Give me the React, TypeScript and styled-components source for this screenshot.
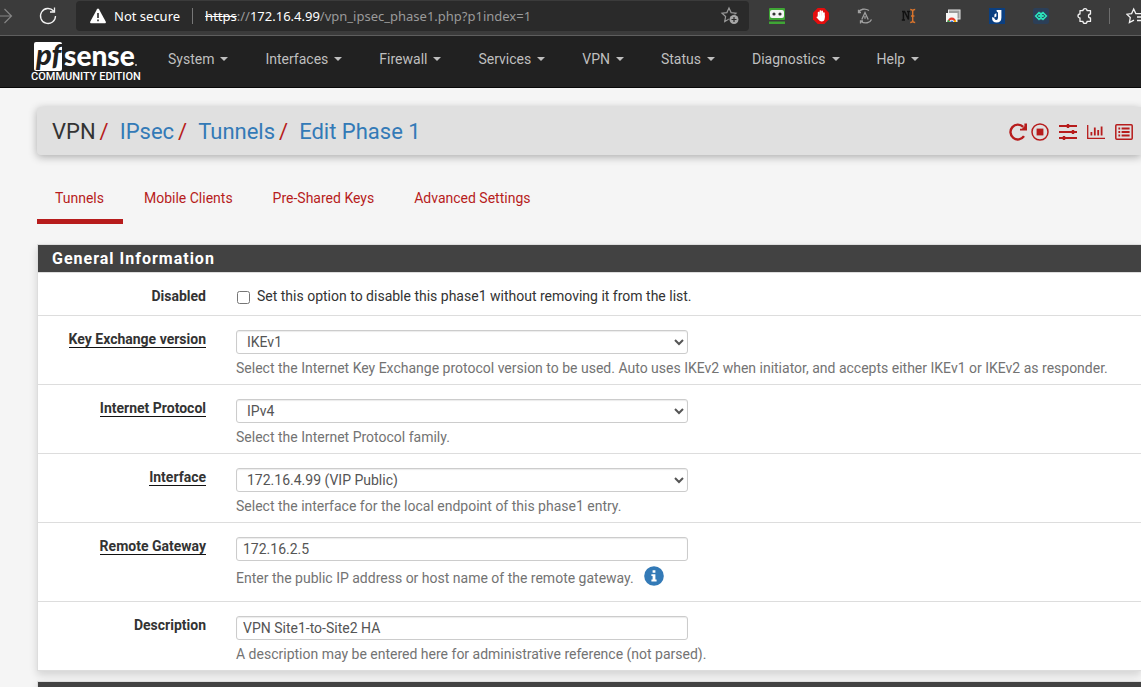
import React from "react";
import styled, { createGlobalStyle } from "styled-components";

const GlobalStyle = createGlobalStyle`
  *, *::before, *::after { box-sizing: border-box; }
  html { background: #f5f5f5; }
  body {
    margin: 0;
    overflow: hidden;
    background: #f5f5f5;
    color: #333;
    font-family: Roboto, "Liberation Sans", sans-serif;
    font-size: 14px;
    line-height: 20px;
  }
  svg { display: block; flex: none; overflow: visible; }
`;

/* Browser toolbar */

const Toolbar = styled.div`
  display: flex;
  height: 36px;
  padding-bottom: 4px;
  background: #3b3b3b;
  border-bottom: 1px solid #5e5e5e;
  font-family: "Noto Sans", "Open Sans", sans-serif;
  font-size: 13px;
`;

const ToolButton = styled.button<{ $width?: number }>`
  display: flex;
  flex: none;
  align-items: center;
  justify-content: center;
  width: ${(p) => p.$width ?? 44}px;
  height: 32px;
  padding: 0;
  border: 0;
  background: none;
  color: #f2f2f2;
`;

const LeftTools = styled.div`
  display: flex;
  flex: none;
  width: 76px;
`;

const AddressBar = styled.div`
  display: flex;
  flex: 1;
  align-items: center;
  min-width: 0;
  height: 30px;
  margin-top: 1px;
  padding: 0 9px 0 14px;
  border-radius: 4px;
  background: #2a2a2a;
`;

const Security = styled.button`
  display: flex;
  flex: none;
  align-items: center;
  gap: 8px;
  padding: 0 12px 0 0;
  border: 0;
  border-right: 1px solid #777;
  background: none;
  color: #fff;
  font: inherit;
  line-height: 16px;
`;

const Url = styled.div`
  flex: 1;
  min-width: 0;
  margin-left: 12px;
  overflow: hidden;
  color: #9a9a9a;
  white-space: nowrap;

  s, b { color: #fff; font-weight: 400; }
`;

const Extensions = styled.div`
  display: flex;
  flex: none;
  padding-left: 6px;
`;

const ToolDivider = styled.span`
  width: 1px;
  height: 16px;
  margin: 8px 16px 0 2px;
  background: #6d6d6d;
`;

const ClippedTool = styled(ToolButton)`
  justify-content: flex-start;
  overflow: hidden;
`;

/* Site navigation */

const NavBar = styled.nav`
  display: flex;
  align-items: flex-start;
  height: 52px;
  padding-left: 31px;
  background: #212121;
  border-bottom: 1px solid #080808;
`;

const Brand = styled.a`
  display: block;
  width: 108px;
  padding-top: 5px;
`;

const Menu = styled.ul`
  display: flex;
  gap: 37px;
  margin: 0;
  padding: 13px 0 0 29px;
  list-style: none;
`;

const MenuLink = styled.a`
  display: flex;
  align-items: center;
  gap: 6px;
  color: #bfbfbf;
  text-decoration: none;
  white-space: nowrap;

  &::after {
    content: "";
    border-top: 4px solid;
    border-right: 4px solid transparent;
    border-left: 4px solid transparent;
  }
`;

/* Page */

const Page = styled.main`
  padding: 19px 0 0 37px;
`;

const PageHeader = styled.header`
  display: flex;
  align-items: center;
  justify-content: space-between;
  height: 48px;
  padding: 2px 8px 0 15px;
  border-radius: 4px 0 0 4px;
  background: #e0e0e0;
  box-shadow: 0 2px 8px rgba(0, 0, 0, 0.3);
`;

const Crumbs = styled.ol`
  display: flex;
  margin: 0;
  padding: 0;
  list-style: none;
  font-size: 22px;
  line-height: 28px;
  white-space: nowrap;

  li + li::before {
    content: "/";
    padding: 0 11px 0 5px;
    color: #b71c1c;
  }

  li + li { margin-left: -1px; }

  a { color: #337ab7; text-decoration: none; }
`;

const Actions = styled.div`
  display: flex;
  gap: 10px;
`;

const ActionGroup = styled.div`
  display: flex;
  gap: 4px;
`;

const ActionLink = styled.a`
  color: #b71c1c;
`;

const Tabs = styled.ul`
  display: flex;
  gap: 3px;
  margin: 26px 0 20px;
  padding: 0;
  list-style: none;
`;

const Tab = styled.a<{ $active?: boolean }>`
  display: block;
  height: 43px;
  padding: 7px 19px 0 18px;
  border-bottom: 5px solid ${(p) => (p.$active ? "#b71c1c" : "transparent")};
  color: #b71c1c;
  text-decoration: none;
`;

const Panel = styled.section`
  margin-bottom: 10px;
  border: solid #ddd;
  border-width: 1px 0 1px 1px;
  background: #fff;
  box-shadow: 0 4px 8px rgba(0, 0, 0, 0.14);
`;

const PanelTitle = styled.h2`
  height: 27px;
  margin: 0;
  padding: 0 14px;
  background: #424242;
  color: #fff;
  font-size: 16px;
  font-weight: 700;
  letter-spacing: 1px;
  line-height: 27px;
`;

const Row = styled.div`
  display: grid;
  grid-template-columns: 168px minmax(0, 1fr);
  column-gap: 30px;
  padding: 14px 1px 6px 0;
  border-top: 1px solid #ddd;
`;

const RowLabel = styled.div`
  height: 20px;
  color: #333;
  font-weight: 700;
  line-height: 18px;
  text-align: right;
`;

const LabelText = styled.label<{ $required?: boolean }>`
  display: inline-block;
  height: 18px;
  border-bottom: ${(p) => (p.$required ? "1px solid #111" : "0")};
`;

const CheckLine = styled.label`
  display: flex;
  align-items: center;
  gap: 7px;
  height: 22px;
  padding-bottom: 4px;
  line-height: 18px;

  input { width: 13px; height: 13px; margin: 2px 0 0 1px; }
`;

const controlStyle = `
  display: block;
  width: 50%;
  height: 24px;
  border: 1px solid #ccc;
  border-radius: 3px;
  background-color: #fff;
  box-shadow: inset 0 1px 1px rgba(0, 0, 0, 0.08);
  color: #555;
  font-family: inherit;
  font-size: 14px;
`;

const Select = styled.select`
  ${controlStyle}
  padding: 0 0 0 6px;
`;

const TextInput = styled.input`
  ${controlStyle}
  padding: 0 6px;
`;

const Help = styled.div<{ $tall?: boolean }>`
  display: flex;
  align-items: center;
  gap: 10px;
  min-height: ${(p) => (p.$tall ? 30 : 20)}px;
  padding-bottom: ${(p) => (p.$tall ? 4 : 0)}px;
  margin-top: 4px;
  color: #737373;
`;

const InfoButton = styled.button`
  padding: 0 0 4px;
  border: 0;
  background: none;
`;

const lineArt = { fill: "none", stroke: "currentColor" } as const;

const Logo = () => (
  <svg width="108" height="40" viewBox="0 0 108 40" role="img" aria-label="pfSense Community Edition">
    <rect x="3" y="1" width="28" height="29" rx="2" fill="#fff" />
    <text x="5" y="24" fontFamily="Lato" fontSize="29" fontWeight="900" fontStyle="italic" fill="#212121">pf</text>
    <text x="33" y="25" fontFamily="Lato" fontSize="28" fontWeight="900" fill="#fff">sense</text>
    <rect x="104" y="23" width="2" height="2" fill="#999" />
    <text x="0" y="39" fontFamily="Roboto" fontSize="11" fontWeight="500" fill="#fff">COMMUNITY EDITION</text>
  </svg>
);

const starPath = "M8 1 L10.1 5.6 L15 6.2 L11.4 9.5 L12.3 14.6 L8 12.1 L3.7 14.6 L4.6 9.5 L1 6.2 L5.9 5.6 Z";

const extensions = [
  {
    name: "Password manager",
    icon: (
      <svg width="16" height="16" viewBox="0 0 16 16">
        <rect width="16" height="12" rx="1" fill="#3fa535" />
        <rect x="1" y="2" width="14" height="8" rx="2" fill="#f4f4f4" />
        <circle cx="5" cy="6" r="1.6" fill="#333" /><circle cx="11" cy="6" r="1.6" fill="#333" />
        <rect y="13.5" width="16" height="2.5" fill="#3fa535" />
      </svg>
    ),
  },
  {
    name: "Ad blocker",
    icon: (
      <svg width="16" height="16" viewBox="0 0 16 16">
        <path d="M4.7 0H11.3L16 4.7V11.3L11.3 16H4.7L0 11.3V4.7Z" fill="#e40d0d" />
        <path d="M5.6 9V4.6M7.4 8V3M9.2 8V3.4M10.9 9V5" stroke="#fff" strokeWidth="1.7" strokeLinecap="round" />
        <path d="M4.8 7.5H11.7V10.5Q11.5 13.5 8.6 13.5Q6.8 13.5 5.6 11.8L3.4 9.2Q4 8.2 4.8 8.9Z" fill="#fff" />
      </svg>
    ),
  },
  {
    name: "Translator",
    icon: (
      <svg width="16" height="16" viewBox="0 0 16 16" fill="none" stroke="#a0a0a0" strokeWidth="1.3">
        <path d="M1.5 4.5C3 1 8 0 12 2.5M1.5 1.8V4.5H4M14.5 11.5C13 15 8 16 4 13.5M3.5 15.5V13H6" />
        <path d="M4.8 11.5L8 4.5L11.2 11.5M8 8V10.8" />
      </svg>
    ),
  },
  {
    name: "Notes",
    icon: (
      <svg width="16" height="16" viewBox="0 0 16 16">
        <path d="M1 3.5H3.5L7.5 11.5V3.5M2.4 3.5V12M0.8 12H4M6 3.5H9" fill="none" stroke="#111" strokeWidth="1.5" />
        <path d="M9.2 1.5Q11.7 1.5 11.7 3.5V12.5Q11.7 14.5 9.2 14.5M14.2 1.5Q11.7 1.5 11.7 3.5M11.7 12.5Q11.7 14.5 14.2 14.5M10 8H13.4" fill="none" stroke="#d9742c" strokeWidth="1.4" />
      </svg>
    ),
  },
  {
    name: "Remote desktop",
    icon: (
      <svg width="16" height="16" viewBox="0 0 16 16">
        <rect x="3.5" y="2" width="11.5" height="9" fill="#9c9c9c" stroke="#e8e8e8" />
        <rect x="1" y="5" width="11.5" height="9" fill="#f5f5f5" />
        <path d="M2.4 14A4.4 4.4 0 0 1 11.2 14Z" fill="#e33b2e" />
        <path d="M2.4 14A4.4 4.4 0 0 1 3 11.7L6 14Z" fill="#2da94f" />
        <path d="M8 14L10.6 11.7A4.4 4.4 0 0 1 11.2 14Z" fill="#fdbd00" />
        <path d="M4.6 14A2.2 2.2 0 0 1 9 14Z" fill="#fff" />
        <path d="M5.2 14A1.6 1.6 0 0 1 8.4 14Z" fill="#3c7de0" />
      </svg>
    ),
  },
  {
    name: "Journal",
    icon: (
      <svg width="16" height="16" viewBox="0 0 16 16">
        <rect width="16" height="16" fill="#0b3f80" />
        <path d="M7.5 2H12.4V9.5Q12.4 14.6 7.6 14.6Q3 14.6 3 9.2Q5.4 9 5.6 10.8Q6.2 12.2 7.6 12Q9 11.8 9 9.6V4.4Q7.5 4.4 7.5 2Z" fill="#fff" />
        <path d="M5.4 6.6L7.4 5V8.6L5.4 9.6Z" fill="#fff" />
      </svg>
    ),
  },
  {
    name: "Network",
    icon: (
      <svg width="16" height="16" viewBox="0 0 16 16">
        <rect width="16" height="16" rx="2" fill="#2b3f58" />
        <path d="M2.6 8L6 4.6L9.4 8L6 11.4ZM6.6 8L10 4.6L13.4 8L10 11.4Z" fill="none" stroke="#2ce6bd" strokeWidth="1.5" />
        <path d="M5 8H7M9 8H11M8 4.4V5.6M8 10.4V11.6" stroke="#2ce6bd" strokeWidth="1.4" />
      </svg>
    ),
  },
  {
    name: "Extensions",
    icon: (
      <svg width="16" height="16" viewBox="0 0 16 16" {...lineArt} strokeWidth="1.3" strokeLinejoin="round">
        <path d="M3 2.6H6A2 2 0 0 1 10 2.6H13.5V6A2 2 0 0 0 13.5 10V13.4H10A2 2 0 0 1 6 13.4H3V10A2 2 0 0 1 3 6Z" />
      </svg>
    ),
  },
];

const menuItems = ["System", "Interfaces", "Firewall", "Services", "VPN", "Status", "Diagnostics", "Help"];
const tabs = ["Tunnels", "Mobile Clients", "Pre-Shared Keys", "Advanced Settings"];

type Field = { id: string; label: string; required?: boolean; kind: "select" | "text"; value: string; help: string; info?: boolean };

const fields: Field[] = [
  { id: "iketype", label: "Key Exchange version", required: true, kind: "select", value: "IKEv1", help: "Select the Internet Key Exchange protocol version to be used. Auto uses IKEv2 when initiator, and accepts either IKEv1 or IKEv2 as responder." },
  { id: "protocol", label: "Internet Protocol", required: true, kind: "select", value: "IPv4", help: "Select the Internet Protocol family." },
  { id: "interface", label: "Interface", required: true, kind: "select", value: "172.16.4.99 (VIP Public)", help: "Select the interface for the local endpoint of this phase1 entry." },
  { id: "remotegw", label: "Remote Gateway", required: true, kind: "text", value: "172.16.2.5", help: "Enter the public IP address or host name of the remote gateway.", info: true },
  { id: "descr", label: "Description", kind: "text", value: "VPN Site1-to-Site2 HA", help: "A description may be entered here for administrative reference (not parsed)." },
];

const BrowserToolbar = () => (
  <Toolbar>
    <LeftTools>
      <ToolButton $width={26} aria-label="Forward">
        <svg width="26" height="16" viewBox="0 0 26 16" fill="none" stroke="#858585" strokeWidth="1.2">
          <path d="M0 8H11.5M4.5 1L11.5 8L4.5 15" />
        </svg>
      </ToolButton>
      <ToolButton aria-label="Reload">
        <svg width="18" height="18" viewBox="0 0 18 18" {...lineArt} strokeWidth="1.3">
          <path d="M16.5 9A7.5 7.5 0 1 1 14.6 4M15.5 0.5V5H11" />
        </svg>
      </ToolButton>
    </LeftTools>
    <AddressBar>
      <Security>
        <svg width="16" height="16" viewBox="0 0 16 16">
          <path d="M8 0.5Q8.6 0.5 9 1.2L15.8 13.8Q16.2 15.3 15 15.3H1Q-0.2 15.3 0.2 13.8L7 1.2Q7.4 0.5 8 0.5Z" fill="#fff" />
          <path d="M8 5V10M8 11.5V13.3" stroke="#2a2a2a" strokeWidth="1.6" />
        </svg>
        Not secure
      </Security>
      <Url><s>https</s>://<b>172.16.4.99</b>/vpn_ipsec_phase1.php?p1index=1</Url>
      <ToolButton $width={20} aria-label="Add to favorites">
        <svg width="18" height="18" viewBox="0 0 18 18">
          <path d={starPath} fill="none" stroke="#999" strokeWidth="1.2" />
          <circle cx="13" cy="12.5" r="5.2" fill="#2a2a2a" /><circle cx="13" cy="12.5" r="4.5" fill="#a6a6a6" />
          <path d="M10.5 12.5H15.5M13 10V15" stroke="#2a2a2a" strokeWidth="1.2" />
        </svg>
      </ToolButton>
    </AddressBar>
    <Extensions>
      {extensions.map((e) => (
        <ToolButton key={e.name} aria-label={e.name}>{e.icon}</ToolButton>
      ))}
      <ToolDivider />
      <ClippedTool $width={15} aria-label="Favorites">
        <svg width="20" height="16" viewBox="0 0 20 16" {...lineArt} strokeWidth="1.3">
          <path d="M12 5.6H9.8L7.7 1L5.6 5.6L0.8 6.2L4.3 9.5L3.4 14.6L8 12.1M11 5.6H20M11 9H20M11 12.5H20" />
        </svg>
      </ClippedTool>
    </Extensions>
  </Toolbar>
);

const HeaderActions = () => (
  <Actions>
    <ActionGroup>
      <ActionLink href="#restart" aria-label="Restart service">
        <svg width="18" height="18" viewBox="0 0 18 18" {...lineArt} strokeWidth="2.4">
          <path d="M15 13.2A7.4 7.4 0 1 1 14.2 3.9" />
          <path d="M18 0.6V7.6H11V5.8H13L15.4 3.2V0.6Z" fill="currentColor" stroke="none" />
        </svg>
      </ActionLink>
      <ActionLink href="#stop" aria-label="Stop service">
        <svg width="18" height="18" viewBox="0 0 18 18" {...lineArt} strokeWidth="1.5">
          <circle cx="9" cy="9" r="8" />
          <rect x="5.6" y="5.6" width="6.8" height="6.8" fill="currentColor" stroke="none" />
        </svg>
      </ActionLink>
    </ActionGroup>
    <ActionLink href="#settings" aria-label="Related settings">
      <svg width="18" height="18" viewBox="0 0 18 18" {...lineArt} strokeWidth="2">
        <path d="M0 3H18M0 9H18M0 15H18" />
        <path d="M9 1V5M14 7V11M5 13V17" strokeWidth="2.4" />
      </svg>
    </ActionLink>
    <ActionLink href="#status" aria-label="Related status">
      <svg width="18" height="18" viewBox="0 0 18 18" {...lineArt} strokeWidth="1.3">
        <path d="M0.7 2V15.3H18" />
        <path d="M4.4 9V12.5M7.8 4.5V12.5M11.2 7V12.5M14.6 3.5V12.5" strokeWidth="1.8" />
      </svg>
    </ActionLink>
    <ActionLink href="#logs" aria-label="Related log entries">
      <svg width="18" height="18" viewBox="0 0 18 18" {...lineArt} strokeWidth="1.5">
        <rect x="0.8" y="1.8" width="16.4" height="14.4" rx="1" />
        <path d="M3.4 5.5H5.2M6.6 5.5H14.6M3.4 9H5.2M6.6 9H14.6M3.4 12.5H5.2M6.6 12.5H14.6" strokeWidth="1.8" />
      </svg>
    </ActionLink>
  </Actions>
);

const FieldRow = ({ field }: { field: Field }) => (
  <Row>
    <RowLabel>
      <LabelText htmlFor={field.id} $required={field.required}>{field.label}</LabelText>
    </RowLabel>
    <div>
      {field.kind === "select" ? (
        <Select id={field.id} defaultValue={field.value}><option>{field.value}</option></Select>
      ) : (
        <TextInput id={field.id} type="text" defaultValue={field.value} />
      )}
      <Help $tall={field.info}>
        {field.help}
        {field.info && (
          <InfoButton type="button" aria-label="More information">
            <svg width="20" height="20" viewBox="0 0 20 20">
              <circle cx="10" cy="10" r="9.8" fill="#337ab7" />
              <path d="M8.6 4.2H11.4V6.8H8.6ZM7.4 8.3H11.4V13.6H12.6V15.4H7.4V13.6H8.6V10H7.4Z" fill="#fff" />
            </svg>
          </InfoButton>
        )}
      </Help>
    </div>
  </Row>
);

export default function App() {
  return (
    <>
      <GlobalStyle />
      <BrowserToolbar />
      <NavBar>
        <Brand href="#home"><Logo /></Brand>
        <Menu>
          {menuItems.map((item) => (
            <li key={item}><MenuLink href="#menu">{item}</MenuLink></li>
          ))}
        </Menu>
      </NavBar>
      <Page>
        <PageHeader>
          <Crumbs>
            <li>VPN</li>
            <li><a href="#ipsec">IPsec</a></li>
            <li><a href="#tunnels">Tunnels</a></li>
            <li><a href="#phase1">Edit Phase 1</a></li>
          </Crumbs>
          <HeaderActions />
        </PageHeader>
        <Tabs>
          {tabs.map((tab, i) => (
            <li key={tab}><Tab href="#tab" $active={i === 0}>{tab}</Tab></li>
          ))}
        </Tabs>
        <form>
          <Panel>
            <PanelTitle>General Information</PanelTitle>
            <Row>
              <RowLabel><LabelText htmlFor="disabled">Disabled</LabelText></RowLabel>
              <CheckLine>
                <input id="disabled" type="checkbox" />
                Set this option to disable this phase1 without removing it from the list.
              </CheckLine>
            </Row>
            {fields.map((field) => (
              <FieldRow key={field.id} field={field} />
            ))}
          </Panel>
          <Panel>
            <PanelTitle />
          </Panel>
        </form>
      </Page>
    </>
  );
}
